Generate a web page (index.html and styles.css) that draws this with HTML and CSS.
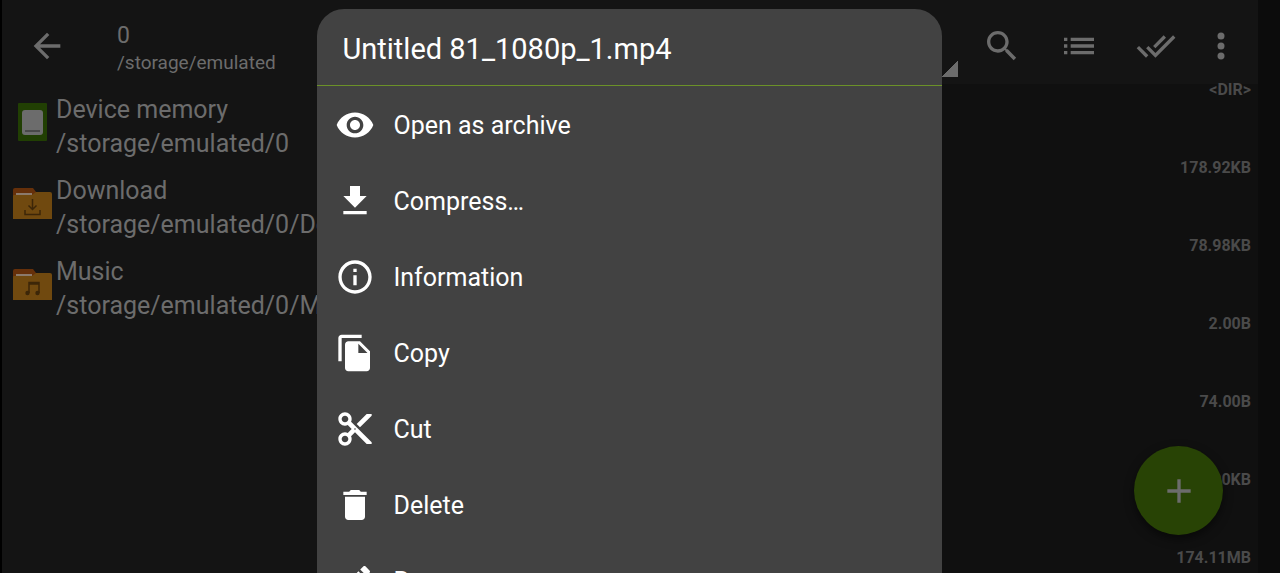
FILE: index.html
```
<!DOCTYPE html>
<html lang="en">
<head>
  <meta charset="UTF-8">
  <meta name="viewport" content="width=device-width, initial-scale=1.0">
  <title>File Manager</title>
  <link rel="stylesheet" href="styles.css">
</head>
<body>
  <div class="app">
    <header class="toolbar">
      <button class="icon-btn back-btn" aria-label="Back">
        <svg class="icon" viewBox="0 0 24 24"><path d="M20 11H7.83l5.59-5.59L12 4l-8 8 8 8 1.41-1.41L7.83 13H20v-2z"/></svg>
      </button>
      <div class="location">
        <div class="location-name">0</div>
        <div class="location-path">/storage/emulated</div>
      </div>
      <span class="spinner-mark"></span>
      <button class="icon-btn" aria-label="Search">
        <svg class="icon" viewBox="0 0 24 24"><path d="M15.5 14h-.79l-.28-.27C15.41 12.59 16 11.11 16 9.5 16 5.91 13.09 3 9.5 3S3 5.91 3 9.5 5.91 16 9.5 16c1.61 0 3.09-.59 4.23-1.57l.27.28v.79l5 4.99L20.49 19l-4.99-5zm-6 0C7.01 14 5 11.99 5 9.5S7.01 5 9.5 5 14 7.01 14 9.5 11.99 14 9.5 14z"/></svg>
      </button>
      <button class="icon-btn" aria-label="View">
        <svg class="icon" viewBox="0 0 24 24"><path d="M3 13h2v-2H3v2zm0 4h2v-2H3v2zm0-8h2V7H3v2zm4 4h14v-2H7v2zm0 4h14v-2H7v2zM7 7v2h14V7H7z"/></svg>
      </button>
      <button class="icon-btn" aria-label="Select all">
        <svg class="icon" viewBox="0 0 24 24"><path d="M18 7l-1.41-1.41-6.34 6.34 1.41 1.41L18 7zm4.24-1.41L11.66 16.17 7.48 12l-1.41 1.41L11.66 19l12-12-1.42-1.41zM.41 13.41L6 19l1.41-1.41L1.83 12 .41 13.41z"/></svg>
      </button>
      <button class="icon-btn more-btn" aria-label="More">
        <svg class="icon" viewBox="0 0 24 24"><circle cx="12" cy="6" r="2.1"/><circle cx="12" cy="12" r="2.1"/><circle cx="12" cy="18" r="2.1"/></svg>
      </button>
    </header>

    <div class="content">
      <nav class="places">
        <a class="place" href="#">
          <svg class="place-icon" viewBox="0 0 40 40">
            <rect x="6" y="1" width="29" height="38" rx="1" fill="#213f03"/>
            <rect x="10" y="8" width="21" height="25" rx="3" fill="#6c6c6c"/>
            <path d="M13 29h15" stroke="#333" stroke-width="1.2"/>
          </svg>
          <span class="place-text">Device memory<br>/storage/emulated/0</span>
        </a>
        <a class="place" href="#">
          <svg class="place-icon" viewBox="0 0 40 40">
            <path d="M1 7q0-2 2-2h18l3 4v6H1z" fill="#66300a"/>
            <path d="M1 13q0-1 1-1h18l4-3h14q2 0 2 2v25H1z" fill="#70490f"/>
            <path d="M4 11h16" stroke="#8b7a6c" stroke-width="2"/>
            <path d="M20.5 16v10M16.5 22.500l4 4 4-4M13 27v4.500h15V27" fill="none" stroke="#3c2608" stroke-width="1.5"/>
          </svg>
          <span class="place-text">Download<br>/storage/emulated/0/Download</span>
        </a>
        <a class="place" href="#">
          <svg class="place-icon" viewBox="0 0 40 40">
            <path d="M1 7q0-2 2-2h18l3 4v6H1z" fill="#66300a"/>
            <path d="M1 13q0-1 1-1h18l4-3h14q2 0 2 2v25H1z" fill="#70490f"/>
            <path d="M4 11h16" stroke="#8b7a6c" stroke-width="2"/>
            <path d="M17 29V18.500h10V29M17 20h10" fill="none" stroke="#3c2608" stroke-width="1.5"/>
            <circle cx="15.5" cy="29" r="2.2" fill="#3c2608"/>
            <circle cx="25.5" cy="29" r="2.2" fill="#3c2608"/>
          </svg>
          <span class="place-text">Music<br>/storage/emulated/0/Music</span>
        </a>
      </nav>
      <ul class="sizes">
        <li>&lt;DIR&gt;</li>
        <li>178.92KB</li>
        <li>78.98KB</li>
        <li>2.00B</li>
        <li>74.00B</li>
        <li>1.00KB</li>
        <li>174.11MB</li>
      </ul>
    </div>
    <button class="fab" aria-label="Add">
      <svg class="icon" viewBox="0 0 24 24"><path d="M19 13h-6v6h-2v-6H5v-2h6V5h2v6h6v2z"/></svg>
    </button>
  </div>

  <div class="overlay">
    <div class="dialog" role="dialog" aria-labelledby="dialogTitle">
      <h1 class="dialog-title" id="dialogTitle">Untitled 81_1080p_1.mp4</h1>
      <div class="menu">
        <button class="menu-item">
          <svg class="icon" viewBox="0 0 24 24"><path d="M12 4.5C7 4.5 2.73 7.61 1 12c1.73 4.39 6 7.5 11 7.5s9.27-3.11 11-7.5c-1.73-4.39-6-7.5-11-7.5zM12 17c-2.76 0-5-2.24-5-5s2.24-5 5-5 5 2.24 5 5-2.24 5-5 5zm0-8c-1.66 0-3 1.34-3 3s1.34 3 3 3 3-1.34 3-3-1.34-3-3-3z"/></svg>
          Open as archive
        </button>
        <button class="menu-item">
          <svg class="icon" viewBox="0 0 24 24"><path d="M19 9h-4V3H9v6H5l7 7 7-7zM5 18v2h14v-2H5z"/></svg>
          Compress…
        </button>
        <button class="menu-item">
          <svg class="icon" viewBox="0 0 24 24"><path d="M11 7h2v2h-2zm0 4h2v6h-2zm1-9C6.48 2 2 6.48 2 12s4.48 10 10 10 10-4.48 10-10S17.52 2 12 2zm0 18c-4.41 0-8-3.59-8-8s3.59-8 8-8 8 3.59 8 8-3.59 8-8 8z"/></svg>
          Information
        </button>
        <button class="menu-item">
          <svg class="icon" viewBox="0 0 24 24"><path d="M16 1H4c-1.1 0-2 .9-2 2v14h2V3h12V1zm-1 4H8c-1.1 0-1.99.9-1.99 2L6 21c0 1.1.89 2 1.99 2H19c1.1 0 2-.9 2-2V11l-6-6zm-1 7V6.5l5.5 5.5H14z"/></svg>
          Copy
        </button>
        <button class="menu-item">
          <svg class="icon" viewBox="0 0 24 24"><path d="M9.64 7.64c.23-.5.36-1.05.36-1.64 0-2.21-1.79-4-4-4S2 3.79 2 6s1.79 4 4 4c.59 0 1.14-.13 1.64-.36L10 12l-2.36 2.36C7.14 14.13 6.59 14 6 14c-2.21 0-4 1.79-4 4s1.79 4 4 4 4-1.79 4-4c0-.59-.13-1.14-.36-1.64L12 14l7 7h3v-1L9.64 7.64zM6 8c-1.1 0-2-.89-2-2s.9-2 2-2 2 .89 2 2-.9 2-2 2zm0 12c-1.1 0-2-.89-2-2s.9-2 2-2 2 .89 2 2-.9 2-2 2zm6-7.5c-.28 0-.5-.22-.5-.5s.22-.5.5-.5.5.22.5.5-.22.5-.5.5zM19 3l-6 6 2 2 7-7V3z"/></svg>
          Cut
        </button>
        <button class="menu-item">
          <svg class="icon" viewBox="0 0 24 24"><path d="M6 19c0 1.1.9 2 2 2h8c1.1 0 2-.9 2-2V7H6v12zM19 4h-3.5l-1-1h-5l-1 1H5v2h14V4z"/></svg>
          Delete
        </button>
        <button class="menu-item">
          <svg class="icon" viewBox="0 0 24 24"><path d="M3 17.25V21h3.75L17.81 9.94l-3.75-3.75L3 17.25zM20.71 7.04c.39-.39.39-1.02 0-1.41l-2.34-2.34c-.39-.39-1.02-.39-1.41 0l-1.83 1.83 3.75 3.75 1.83-1.83z"/></svg>
          Rename
        </button>
      </div>
    </div>
  </div>
</body>
</html>
```

FILE: styles.css
```
* {
  box-sizing: border-box;
}
body {
  margin: 0;
  height: 100vh;
  overflow: hidden;
  font-family: Roboto, Arial, sans-serif;
  background: #0c0c0c;
  color: #6c6c6c;
}
button {
  font: inherit;
  color: inherit;
  background: none;
  border: none;
  padding: 0;
  cursor: pointer;
}
.icon {
  width: 40px;
  height: 40px;
  fill: currentColor;
  flex-shrink: 0;
}

/* file browser */
.app {
  height: 100vh;
  margin-right: 22px;
  border-left: 2px solid #000;
  display: flex;
  flex-direction: column;
}
.toolbar {
  display: flex;
  align-items: center;
  height: 84px;
  padding: 8px 10px 0 0;
  background: #141414;
  flex-shrink: 0;
}
.icon-btn {
  display: flex;
  align-items: center;
  justify-content: center;
  width: 77px;
  height: 76px;
}
.back-btn {
  width: 90px;
}
.more-btn {
  width: 54px;
}
.location {
  flex: 1;
  padding: 6px 0 0 25px;
}
.location-name {
  font-size: 23px;
  line-height: 28px;
}
.location-path {
  font-size: 19px;
  line-height: 26px;
}
.spinner-mark {
  align-self: flex-end;
  width: 16px;
  height: 16px;
  margin: 0 5px 7px 0;
  background: linear-gradient(135deg, transparent 50%, #6c6c6c 50%);
}
.content {
  flex: 1;
  min-height: 0;
  display: flex;
}
.places {
  width: 30%;
  padding-top: 9px;
  background: #141414;
  overflow: hidden;
}
.place {
  display: flex;
  gap: 4px;
  height: 81px;
  padding-left: 10px;
  color: inherit;
  text-decoration: none;
  white-space: nowrap;
}
.place-icon {
  width: 40px;
  height: 40px;
  margin-top: 9px;
  flex-shrink: 0;
}
.place-text {
  font-size: 25px;
  line-height: 34px;
}
.sizes {
  flex: 1;
  margin: 0;
  padding: 0 7px 0 0;
  list-style: none;
  text-align: right;
  font-size: 16px;
  font-weight: bold;
  line-height: 12px;
  color: #4a4a4a;
  background: #101010;
}
.sizes li {
  height: 78px;
}
.fab {
  position: absolute;
  right: 57px;
  bottom: 38px;
  display: flex;
  align-items: center;
  justify-content: center;
  width: 89px;
  height: 89px;
  border-radius: 50%;
  background: #284305;
  box-shadow: 0 4px 10px rgba(0, 0, 0, 0.5);
}

/* file actions dialog */
.overlay {
  position: absolute;
  top: 0;
  right: 22px;
  bottom: 0;
  left: 0;
  display: flex;
  justify-content: center;
  align-items: flex-start;
  padding-top: 9px;
  overflow: hidden;
}
.dialog {
  width: 90%;
  max-width: 625px;
  max-height: 100%;
  display: flex;
  flex-direction: column;
  border-radius: 27px 27px 0 0;
  background: #424242;
  color: #fff;
}
.dialog-title {
  margin: 0;
  padding: 4px 26px 0;
  font-size: 29px;
  font-weight: normal;
  line-height: 72px;
  border-bottom: 1px solid #6b9128;
}
.menu {
  padding-top: 1px;
  overflow-y: auto;
  scrollbar-width: none;
}
.menu-item {
  display: flex;
  align-items: center;
  gap: 19px;
  width: 100%;
  height: 76px;
  padding-left: 18px;
  font-size: 25px;
  text-align: left;
}
```
